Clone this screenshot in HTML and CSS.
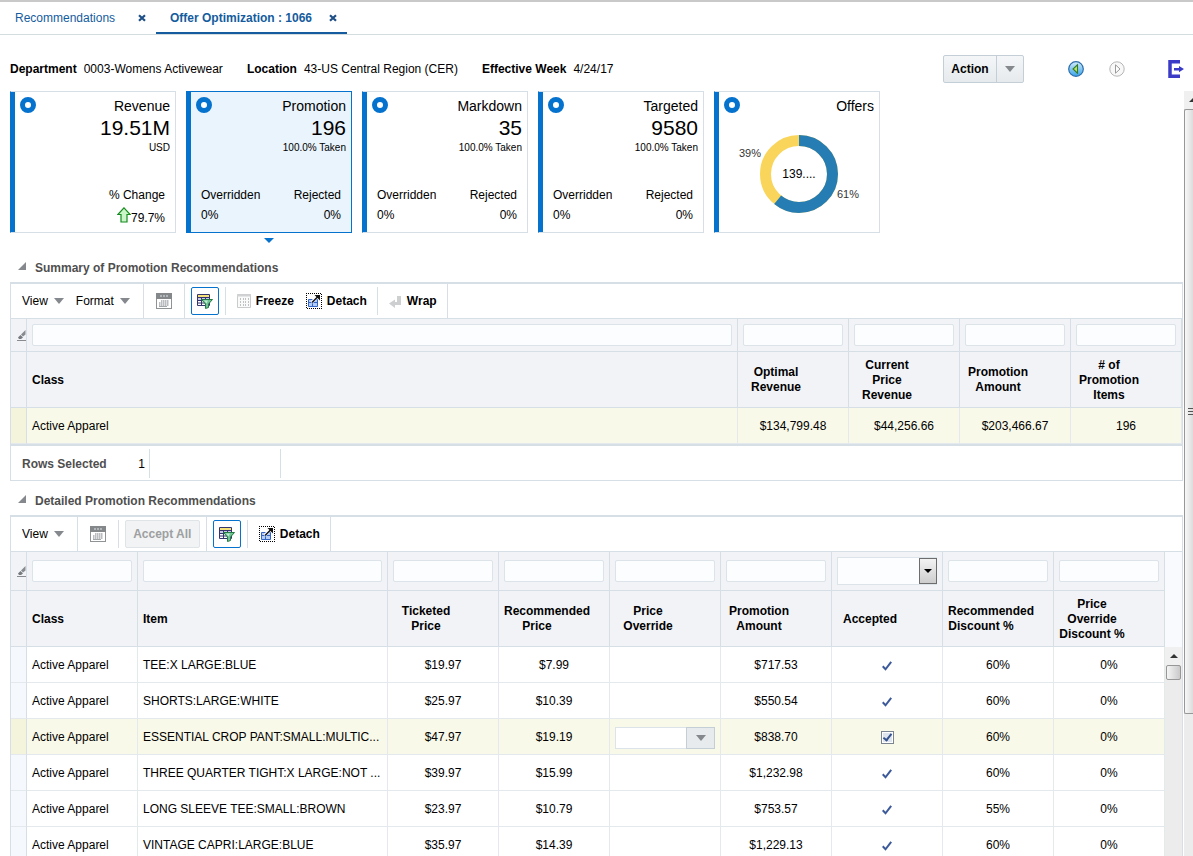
FILE: index.html
```html
<!DOCTYPE html>
<html lang="en">
<head>
  <meta charset="utf-8">
  <title>Offer Optimization : 1066</title>
  <link rel="stylesheet" href="styles.css">
</head>
<body>
  <!-- shared icons -->
  <svg class="icon-defs" aria-hidden="true">
    <symbol id="i-close" viewBox="0 0 8 8">
      <path d="M1 1.2l6 5.6M7 1.2l-6 5.6" stroke="#1d4f86" stroke-width="2.2" fill="none"/>
    </symbol>
    <symbol id="i-down" viewBox="0 0 10 6">
      <path d="M0 0h10L5 6z" fill="#85898d"/>
    </symbol>
    <symbol id="i-ring" viewBox="0 0 16 16">
      <circle cx="8" cy="8" r="5.5" fill="#fff" stroke="#0572ce" stroke-width="5"/>
    </symbol>
    <symbol id="i-disclose" viewBox="0 0 8 8">
      <path d="M8 0v8H0z" fill="#85898d"/>
    </symbol>
    <symbol id="i-calendar" viewBox="0 0 16 16">
      <rect x=".5" y=".5" width="15" height="15" fill="#fff" stroke="#909396"/>
      <path d="M0 0h16v6H0z" fill="#85888b"/>
      <path d="M4 2h2v2H4zM7 2h2v2H7zM10 2h2v2h-2z" fill="#b4b7ba"/>
      <path d="M5 8h8M3 10h10M3 12h10" stroke="#a4a7aa" stroke-width="1.500" stroke-dasharray="1.500 .5"/>
      <path d="M3 13.500h8" stroke="#a4a7aa"/>
    </symbol>
    <symbol id="i-filter" viewBox="0 0 16 16">
      <path d="M.5 1.500h12v11H.5z" fill="#fff" stroke="#35356e"/>
      <path d="M1 2h11v2.500H1z" fill="#f5e27a"/>
      <path d="M1 5h11v2H1z" fill="#c9c9e6"/>
      <path d="M.5 4.500h12M.5 7.500h12M.5 10h12M4.500 4.500v8M8.500 4.500v8" stroke="#35356e"/>
      <path d="M4.500 6.500h11l-4 4.500v3.500l-3 1V11z" fill="#6fc592" stroke="#237a45"/>
      <path d="M7 7.500h4l-1.500 3z" fill="#c3ecd2"/>
    </symbol>
    <symbol id="i-freeze" viewBox="0 0 14 14">
      <path d="M.5.5h13v13H.5z" fill="#fafafa" stroke="#c9cbcd"/>
      <path d="M0 1.500h14" stroke="#d0d2d4" stroke-width="2"/>
      <path d="M3.500 4v8M6.500 4v8M8.500 4v8M11.500 4v8" stroke="#bfc1c3" stroke-dasharray="2 1"/>
    </symbol>
    <symbol id="i-detach" viewBox="0 0 16 16">
      <path d="M0 0h16v16H0z" fill="#fff"/>
      <path d="M0 .5h16M1 15.500h15M.5 0v16M15.500 1v15" stroke="#000" stroke-dasharray="1 1"/>
      <path d="M2.500 6.500h9v7h-9z" fill="#b6cdf5" stroke="#3465c4"/>
      <path d="M2.500 9.500h9M6.500 9.500v4" stroke="#3465c4"/>
      <path d="M5.500 9.500L11 4" stroke="#fff" stroke-width="3"/>
      <path d="M6 9.500L12 3.500" stroke="#111" stroke-width="1.500"/>
      <path d="M8.500 2H14v5.500z" fill="#111"/>
    </symbol>
    <symbol id="i-wrap" viewBox="0 0 13 13">
      <path d="M8 1h4v9H6v3L0 8.500 6 4.500V7h2z" fill="#cdcfd1"/>
    </symbol>
    <symbol id="i-eraser" viewBox="0 0 9 11">
      <path d="M8.500 0v4.500L6 6.500 4 4.500z" fill="#888b8f"/>
      <path d="M3.500 5L6 7.500 4 9H2L1 7.500z" fill="#777a7e"/>
      <path d="M0 10.500h9" stroke="#888b8f"/>
    </symbol>
    <symbol id="i-check" viewBox="0 0 10 10">
      <path d="M.7 5.300L3.500 8.300 9.200.8" fill="none" stroke="#3c5a9a" stroke-width="2"/>
    </symbol>
    <symbol id="i-scroll-up" viewBox="0 0 8 4">
      <path d="M4 0l4 4H0z" fill="#333"/>
    </symbol>
  </svg>

  <div class="app">
    <nav class="tabs">
      <div class="tab">
        <a href="#">Recommendations</a>
        <button class="icon-btn" aria-label="Close"><svg width="8" height="8"><use href="#i-close"/></svg></button>
      </div>
      <div class="tab tab-active">
        <a href="#">Offer Optimization : 1066</a>
        <button class="icon-btn" aria-label="Close"><svg width="8" height="8"><use href="#i-close"/></svg></button>
      </div>
    </nav>

    <header class="context">
      <dl class="context-list">
        <div><dt>Department</dt><dd>0003-Womens Activewear</dd></div>
        <div><dt>Location</dt><dd>43-US Central Region (CER)</dd></div>
        <div><dt>Effective Week</dt><dd>4/24/17</dd></div>
      </dl>
      <div class="actions">
        <button class="split-main">Action</button>
        <button class="split-arrow" aria-label="Action menu"><svg width="10" height="6"><use href="#i-down"/></svg></button>
      </div>
      <div class="pager">
        <button class="icon-btn" aria-label="Previous">
          <svg width="16" height="16" viewBox="0 0 16 16">
            <defs><linearGradient id="blueball" x1="0" y1="0" x2="0" y2="1"><stop offset="0" stop-color="#d3ecfb"/><stop offset="1" stop-color="#38a3ea"/></linearGradient></defs>
            <circle cx="8" cy="8" r="7.300" fill="url(#blueball)" stroke="#2d6cab" stroke-width="1.200"/>
            <path d="M9.500 3.800v8.400L5 8z" fill="#b4e66c" stroke="#35792a" stroke-width="1.100"/>
          </svg>
        </button>
        <button class="icon-btn" aria-label="Next" disabled>
          <svg width="16" height="16" viewBox="0 0 16 16">
            <circle cx="8" cy="8" r="7.200" fill="#f8f8f8" stroke="#b5b5b5"/>
            <path d="M6.500 3.800v8.400L11 8z" fill="#fff" stroke="#9a9a9a"/>
          </svg>
        </button>
      </div>
      <button class="icon-btn" aria-label="Exit">
        <svg width="16" height="18" viewBox="0 0 16 18">
          <path d="M12 1.800H2v14.400h10" fill="none" stroke="#3b3bc8" stroke-width="3.500"/>
          <path d="M6 8h5V6l5 3-5 3.200V10.500H6z" fill="#3b3bc8"/>
        </svg>
      </button>
    </header>

    <div class="workspace">
      <main class="content">
        <div class="tiles">
          <section class="tile">
            <div class="tile-head">
              <svg width="16" height="16"><use href="#i-ring"/></svg>
              <div class="tile-figures"><h2>Revenue</h2><strong>19.51M</strong><small>USD</small></div>
            </div>
            <div class="tile-metrics">
              <div class="metric metric-end">
                <span>% Change</span>
                <span class="trend">
                  <svg width="14" height="16" viewBox="0 0 14 16"><path d="M7 .8L13.200 7.500H10v7.500H4V7.500H.8z" fill="#c9f5c9" stroke="#178a1e" stroke-width="1.200"/></svg>79.7%
                </span>
              </div>
            </div>
          </section>
          <section class="tile tile-selected">
            <div class="tile-head">
              <svg width="16" height="16"><use href="#i-ring"/></svg>
              <div class="tile-figures"><h2>Promotion</h2><strong>196</strong><small>100.0% Taken</small></div>
            </div>
            <div class="tile-metrics">
              <div class="metric"><span>Overridden</span><span>0%</span></div>
              <div class="metric metric-end"><span>Rejected</span><span>0%</span></div>
            </div>
          </section>
          <section class="tile">
            <div class="tile-head">
              <svg width="16" height="16"><use href="#i-ring"/></svg>
              <div class="tile-figures"><h2>Markdown</h2><strong>35</strong><small>100.0% Taken</small></div>
            </div>
            <div class="tile-metrics">
              <div class="metric"><span>Overridden</span><span>0%</span></div>
              <div class="metric metric-end"><span>Rejected</span><span>0%</span></div>
            </div>
          </section>
          <section class="tile">
            <div class="tile-head">
              <svg width="16" height="16"><use href="#i-ring"/></svg>
              <div class="tile-figures"><h2>Targeted</h2><strong>9580</strong><small>100.0% Taken</small></div>
            </div>
            <div class="tile-metrics">
              <div class="metric"><span>Overridden</span><span>0%</span></div>
              <div class="metric metric-end"><span>Rejected</span><span>0%</span></div>
            </div>
          </section>
          <section class="tile">
            <div class="tile-head">
              <svg width="16" height="16"><use href="#i-ring"/></svg>
              <div class="tile-figures"><h2>Offers</h2></div>
            </div>
            <svg class="donut" width="160" height="110" viewBox="0 0 160 110">
              <circle cx="80" cy="58" r="33.500" fill="none" stroke="#fad55c" stroke-width="11"/>
              <circle cx="80" cy="58" r="33.500" fill="none" stroke="#267db3" stroke-width="11" pathLength="100" stroke-dasharray="61 39" transform="rotate(-90 80 58)"/>
              <text class="donut-total" x="80" y="62" text-anchor="middle">139....</text>
              <text x="20" y="41">39%</text>
              <text x="118" y="82">61%</text>
            </svg>
          </section>
        </div>

        <section class="panel">
          <h3><svg width="8" height="8"><use href="#i-disclose"/></svg>Summary of Promotion Recommendations</h3>
          <div class="grid-box">
            <div class="toolbar">
              <div class="tool-group menus">
                <button class="menu">View<svg width="10" height="6"><use href="#i-down"/></svg></button>
                <button class="menu">Format<svg width="10" height="6"><use href="#i-down"/></svg></button>
              </div>
              <div class="tool-group">
                <button class="icon-btn" aria-label="Export"><svg width="16" height="16"><use href="#i-calendar"/></svg></button>
              </div>
              <div class="tool-group tight short">
                <button class="filter-btn" aria-label="Query by example" aria-pressed="true"><svg width="16" height="16"><use href="#i-filter"/></svg></button>
              </div>
              <div class="tool-group tools short">
                <button class="tool"><svg width="14" height="14"><use href="#i-freeze"/></svg>Freeze</button>
                <button class="tool"><svg width="16" height="16"><use href="#i-detach"/></svg>Detach</button>
              </div>
              <div class="tool-group tools">
                <button class="tool"><svg width="13" height="13"><use href="#i-wrap"/></svg>Wrap</button>
              </div>
            </div>
            <table class="grid">
              <colgroup><col class="col-mark"><col><col class="col-num"><col class="col-num"><col class="col-num"><col class="col-num"></colgroup>
              <thead>
                <tr class="filters">
                  <td class="mark"><svg width="9" height="11"><use href="#i-eraser"/></svg></td>
                  <td><input type="text" aria-label="Class"></td>
                  <td><input type="text" aria-label="Optimal Revenue"></td>
                  <td><input type="text" aria-label="Current Price Revenue"></td>
                  <td><input type="text" aria-label="Promotion Amount"></td>
                  <td><input type="text" aria-label="# of Promotion Items"></td>
                </tr>
                <tr class="heads">
                  <td class="mark"></td>
                  <th class="text">Class</th>
                  <th>Optimal Revenue</th>
                  <th>Current Price Revenue</th>
                  <th>Promotion Amount</th>
                  <th># of Promotion Items</th>
                </tr>
              </thead>
              <tbody>
                <tr class="selected">
                  <td class="mark"></td>
                  <td class="text">Active Apparel</td>
                  <td>$134,799.48</td>
                  <td>$44,256.66</td>
                  <td>$203,466.67</td>
                  <td>196</td>
                </tr>
              </tbody>
            </table>
            <div class="status">
              <div class="status-cell"><b>Rows Selected</b><span>1</span></div>
              <div class="status-cell"></div>
            </div>
          </div>
        </section>

        <section class="panel">
          <h3><svg width="8" height="8"><use href="#i-disclose"/></svg>Detailed Promotion Recommendations</h3>
          <div class="grid-box">
            <div class="toolbar">
              <div class="tool-group menus">
                <button class="menu">View<svg width="10" height="6"><use href="#i-down"/></svg></button>
              </div>
              <div class="tool-group short">
                <button class="icon-btn" aria-label="Export"><svg width="16" height="16"><use href="#i-calendar"/></svg></button>
              </div>
              <div class="tool-group tight">
                <button class="accept" disabled>Accept All</button>
              </div>
              <div class="tool-group tight short">
                <button class="filter-btn" aria-label="Query by example" aria-pressed="true"><svg width="16" height="16"><use href="#i-filter"/></svg></button>
              </div>
              <div class="tool-group tools">
                <button class="tool"><svg width="16" height="16"><use href="#i-detach"/></svg>Detach</button>
              </div>
            </div>
            <div class="scroll-grid">
              <table class="grid detail">
                <colgroup>
                  <col class="col-mark"><col class="col-num"><col><col class="col-num"><col class="col-num"><col class="col-num"><col class="col-num"><col class="col-num"><col class="col-num"><col class="col-num">
                </colgroup>
                <thead>
                  <tr class="filters">
                    <td class="mark"><svg width="9" height="11"><use href="#i-eraser"/></svg></td>
                    <td><input type="text" aria-label="Class"></td>
                    <td><input type="text" aria-label="Item"></td>
                    <td><input type="text" aria-label="Ticketed Price"></td>
                    <td><input type="text" aria-label="Recommended Price"></td>
                    <td><input type="text" aria-label="Price Override"></td>
                    <td><input type="text" aria-label="Promotion Amount"></td>
                    <td>
                      <div class="select-wrap">
                        <select aria-label="Accepted"><option></option></select>
                        <span class="select-arrow"><svg width="8" height="4" viewBox="0 0 8 4"><path d="M0 0h8L4 4z"/></svg></span>
                      </div>
                    </td>
                    <td><input type="text" aria-label="Recommended Discount %"></td>
                    <td><input type="text" aria-label="Price Override Discount %"></td>
                  </tr>
                  <tr class="heads">
                    <td class="mark"></td>
                    <th class="text">Class</th>
                    <th class="text">Item</th>
                    <th>Ticketed Price</th>
                    <th>Recommended Price</th>
                    <th>Price Override</th>
                    <th>Promotion Amount</th>
                    <th>Accepted</th>
                    <th>Recommended Discount&nbsp;%</th>
                    <th>Price Override Discount&nbsp;%</th>
                  </tr>
                </thead>
                <tbody>
                  <tr>
                    <td class="mark"></td>
                    <td class="text">Active Apparel</td>
                    <td class="text">TEE:X LARGE:BLUE</td>
                    <td>$19.97</td>
                    <td>$7.99</td>
                    <td></td>
                    <td>$717.53</td>
                    <td><svg class="tick" width="10" height="10"><use href="#i-check"/></svg></td>
                    <td>60%</td>
                    <td>0%</td>
                  </tr>
                  <tr>
                    <td class="mark"></td>
                    <td class="text">Active Apparel</td>
                    <td class="text">SHORTS:LARGE:WHITE</td>
                    <td>$25.97</td>
                    <td>$10.39</td>
                    <td></td>
                    <td>$550.54</td>
                    <td><svg class="tick" width="10" height="10"><use href="#i-check"/></svg></td>
                    <td>60%</td>
                    <td>0%</td>
                  </tr>
                  <tr class="selected">
                    <td class="mark"></td>
                    <td class="text">Active Apparel</td>
                    <td class="text">ESSENTIAL CROP PANT:SMALL:MULTIC...</td>
                    <td>$47.97</td>
                    <td>$19.19</td>
                    <td>
                      <div class="combo">
                        <input type="text" aria-label="Price Override">
                        <button aria-label="Choose price"><svg width="10" height="6"><use href="#i-down"/></svg></button>
                      </div>
                    </td>
                    <td>$838.70</td>
                    <td><input type="checkbox" aria-label="Accepted" checked></td>
                    <td>60%</td>
                    <td>0%</td>
                  </tr>
                  <tr>
                    <td class="mark"></td>
                    <td class="text">Active Apparel</td>
                    <td class="text">THREE QUARTER TIGHT:X LARGE:NOT ...</td>
                    <td>$39.97</td>
                    <td>$15.99</td>
                    <td></td>
                    <td>$1,232.98</td>
                    <td><svg class="tick" width="10" height="10"><use href="#i-check"/></svg></td>
                    <td>60%</td>
                    <td>0%</td>
                  </tr>
                  <tr>
                    <td class="mark"></td>
                    <td class="text">Active Apparel</td>
                    <td class="text">LONG SLEEVE TEE:SMALL:BROWN</td>
                    <td>$23.97</td>
                    <td>$10.79</td>
                    <td></td>
                    <td>$753.57</td>
                    <td><svg class="tick" width="10" height="10"><use href="#i-check"/></svg></td>
                    <td>55%</td>
                    <td>0%</td>
                  </tr>
                  <tr>
                    <td class="mark"></td>
                    <td class="text">Active Apparel</td>
                    <td class="text">VINTAGE CAPRI:LARGE:BLUE</td>
                    <td>$35.97</td>
                    <td>$14.39</td>
                    <td></td>
                    <td>$1,229.13</td>
                    <td><svg class="tick" width="10" height="10"><use href="#i-check"/></svg></td>
                    <td>60%</td>
                    <td>0%</td>
                  </tr>
                </tbody>
              </table>
              <div class="grid-scroll" aria-hidden="true">
                <div class="grid-scroll-head"></div>
                <div class="scroll-up"><svg width="8" height="4"><use href="#i-scroll-up"/></svg></div>
                <div class="grid-thumb"></div>
              </div>
            </div>
          </div>
        </section>
      </main>

      <!-- page scrollbar -->
      <div class="page-scroll" aria-hidden="true">
        <div class="scroll-up"><svg width="8" height="4"><use href="#i-scroll-up"/></svg></div>
        <div class="page-track">
          <div class="page-thumb"><i></i><i></i><i></i></div>
        </div>
      </div>
    </div>
  </div>
</body>
</html>
```

FILE: styles.css
```css
* {
  box-sizing: border-box;
}

body {
  margin: 0;
  background: #fff;
  color: #000;
  font: 12px/15px "Liberation Sans", Arial, sans-serif;
}

button,
input,
select {
  font: inherit;
  color: inherit;
}

button {
  padding: 0;
  border: 0;
  background: none;
}

svg {
  display: block;
  flex: none;
}

.icon-defs {
  position: absolute;
  width: 0;
  height: 0;
}

.icon-btn {
  display: flex;
}

.app {
  display: flex;
  flex-direction: column;
  height: 100vh;
  overflow: hidden;
  border-top: 2px solid #c9c9c9;
}

/* tabs */
.tabs {
  display: flex;
  flex: none;
  height: 33px;
  padding-left: 1px;
  border-bottom: 1px solid #d3dcdf;
}

.tab {
  display: flex;
  align-items: center;
  gap: 17px;
  padding: 2px 10px 0 14px;
  border-bottom: 2px solid transparent;
}

.tab a {
  min-width: 106px;
  color: #145c9e;
  text-decoration: none;
}

.tab-active {
  border-bottom-color: #145c9e;
  font-weight: bold;
}

/* context bar */
.context {
  display: flex;
  flex: none;
  align-items: center;
  height: 56px;
  padding: 12px 9px 0 10px;
}

.context-list {
  display: flex;
  gap: 24px;
  margin: 0;
}

.context-list div {
  display: flex;
  gap: 7px;
}

.context-list dt {
  font-weight: bold;
}

.context-list dd {
  margin: 0;
}

.actions {
  display: flex;
  height: 28px;
  margin-left: auto;
  border: 1px solid #c4ced7;
  border-radius: 2px;
  background: linear-gradient(#f4f6f8, #e6eaed);
}

.split-main {
  width: 52px;
  font-weight: bold;
}

.split-arrow {
  display: flex;
  align-items: center;
  justify-content: center;
  width: 27px;
  border-left: 1px solid #c4ced7;
}

.pager {
  display: flex;
  gap: 25px;
  margin: 0 43px 0 44px;
}

/* workspace */
.workspace {
  display: flex;
  flex: 1;
  min-height: 0;
}

.content {
  flex: 1;
  min-width: 0;
  padding: 0 1px 0 10px;
}

/* tiles */
.tiles {
  display: flex;
  gap: 10px;
  margin-bottom: 20px;
}

.tile {
  position: relative;
  width: 166px;
  padding-left: 4px;
  border: 1px solid #d6dfe6;
  border-left-color: #0572ce;
  box-shadow: inset 4px 0 #0572ce;
}

.tile-selected {
  border-color: #0572ce;
  background: #e9f4fc;
}

/* pointer under the selected tile */
.tile-selected::after {
  content: "";
  position: absolute;
  left: 77px;
  bottom: -11px;
  border: 5px solid transparent;
  border-top: 5px solid #0572ce;
  border-bottom: 0;
}

.tile-head {
  display: flex;
  justify-content: space-between;
  padding: 4px 5px 0 5px;
}

.tile-head svg {
  margin-top: 1px;
}

.tile-figures {
  display: flex;
  flex-direction: column;
  text-align: right;
}

.tile h2 {
  margin: 0;
  font-size: 14px;
  font-weight: normal;
  line-height: 20px;
}

.tile strong {
  font-size: 21px;
  font-weight: normal;
  line-height: 24px;
}

.tile small {
  font-size: 10px;
  line-height: 16px;
}

.tile-metrics {
  display: flex;
  justify-content: space-between;
  padding: 29px 10px 1px;
  line-height: 20px;
}

.metric {
  display: flex;
  flex-direction: column;
}

.metric-end {
  margin-left: auto;
  text-align: right;
}

.trend {
  display: flex;
  align-items: flex-end;
  justify-content: flex-end;
  line-height: 26px;
}

.trend svg {
  margin-bottom: 8px;
}

.donut {
  fill: #333;
  font-size: 11px;
}

.donut-total {
  fill: #000;
  font-size: 12px;
}

/* panels */
.panel {
  margin-bottom: 5px;
}

.panel h3 {
  display: flex;
  align-items: center;
  gap: 9px;
  margin: 0;
  padding: 2px 0 0 8px;
  color: #4f4f4f;
  font-size: 12px;
  line-height: 27px;
}

.panel h3 svg {
  margin-bottom: 5px;
}

.grid-box {
  border: 1px solid #d6dfe6;
  border-top-width: 2px;
}

/* toolbar */
.toolbar {
  display: flex;
  height: 35px;
  border-bottom: 1px solid #d6dfe6;
}

.tool-group {
  display: flex;
  align-items: center;
  gap: 12px;
  padding: 0 12px;
  border-right: 1px solid #d6dfe6;
}

.tool-group.short {
  margin: 3px 0;
}

.menus {
  padding: 0 13px 0 11px;
}

.tight {
  padding: 0 6px;
}

.tools {
  padding: 0 10px 0 11px;
}

.menu,
.tool {
  display: flex;
  align-items: center;
  gap: 6px;
}

.tool {
  gap: 5px;
  font-weight: bold;
}

.filter-btn {
  display: flex;
  align-items: center;
  justify-content: center;
  width: 28px;
  height: 28px;
  border: 1px solid #0572ce;
  border-radius: 2px;
}

.accept {
  width: 75px;
  height: 28px;
  border: 1px solid #dfe4e7;
  border-radius: 2px;
  background: #f1f3f5;
  color: #9d9fa1;
  font-weight: bold;
}

/* grids */
.grid {
  width: 100%;
  border-spacing: 0;
  table-layout: fixed;
}

.grid td,
.grid th {
  padding: 0 5px;
  border: 0 solid #d6dfe6;
  border-width: 0 1px 1px 0;
  text-align: center;
}

.col-mark {
  width: 16px;
}

.col-num {
  width: 111px;
}

.grid thead td,
.grid thead th {
  background: #f1f3f7;
}

.grid .filters td {
  height: 33px;
}

.detail .filters td {
  height: 39px;
}

.grid .heads th {
  height: 56px;
  padding: 1px 39px 0 5px;
}

.grid tbody td {
  height: 36px;
  padding-top: 2px;
  border-color: #e4e9ed;
}

.grid .mark {
  padding: 0;
  border-right-color: #d6dfe6;
}

.grid .text {
  text-align: left;
  white-space: nowrap;
}

.grid .mark svg {
  margin-left: auto;
}

.grid tbody .mark {
  background: #f5f8fc;
}

.grid .selected td {
  background: #f9f9e9;
}

.grid .selected .mark {
  background: #f4f3dc;
}

.grid input[type="text"] {
  display: block;
  width: 100%;
  height: 22px;
  border: 1px solid #dce3e9;
  border-radius: 2px;
  background: #fcfdfe;
}

.select-wrap {
  position: relative;
}

.select-wrap select {
  display: block;
  width: 100%;
  height: 28px;
  border: 1px solid #dce3e9;
  background: #fcfdfe;
  appearance: none;
}

.select-arrow {
  position: absolute;
  top: 1px;
  right: 0;
  display: flex;
  align-items: center;
  justify-content: center;
  width: 18px;
  height: 26px;
  border: 1px solid #6d6d6d;
  background: linear-gradient(#f3f3f3, #cdcdcd);
  pointer-events: none;
}

.combo {
  display: flex;
}

.grid .combo input {
  flex: 1;
  min-width: 0;
  border-right: 0;
  border-radius: 0;
  background: #fff;
}

.combo button {
  display: flex;
  align-items: center;
  justify-content: center;
  width: 29px;
  height: 22px;
  border: 1px solid #c4ced7;
  background: #e7ebee;
}

.tick {
  margin: 0 auto;
}

.grid input[type="checkbox"] {
  display: block;
  width: 13px;
  height: 13px;
  margin: 0 auto;
  border: 1px solid #7b8592;
  background: #dfe5ef;
  box-shadow: inset 0 0 0 1px #fff;
  appearance: none;
}

.grid input[type="checkbox"]:checked::after {
  content: "";
  display: block;
  width: 3px;
  height: 7px;
  margin: 0 auto;
  border: solid #35538f;
  border-width: 0 2px 2px 0;
  transform: rotate(38deg);
}

/* footer of the summary grid */
.status {
  display: flex;
  height: 36px;
  padding: 3px 0 2px;
  border-top: 2px solid #d6dfe6;
}

.status-cell {
  display: flex;
  align-items: center;
  justify-content: space-between;
  width: 131px;
  padding-top: 1px;
  border-right: 1px solid #d6dfe6;
}

.status-cell:first-child {
  width: 139px;
  padding: 1px 4px 0 11px;
}

.status b {
  color: #4f4f4f;
}

/* scrollbars */
.scroll-grid {
  display: flex;
}

.grid-scroll {
  display: flex;
  flex-direction: column;
  width: 17px;
  flex: none;
  background: #ececec;
}

.grid-scroll-head {
  height: 95px;
  background: #f8fafd;
}

.scroll-up {
  display: flex;
  align-items: center;
  justify-content: center;
  height: 18px;
  flex: none;
  background: #f0f0f0;
}

.grid-thumb {
  height: 15px;
  margin: 0 1px;
  border: 1px solid #979797;
  border-radius: 2px;
  background: linear-gradient(90deg, #f5f5f5, #c9c9c9);
}

.page-scroll {
  display: flex;
  flex-direction: column;
  width: 9px;
  overflow: hidden;
  background: #ececec;
}

.page-scroll .scroll-up {
  justify-content: flex-start;
  padding-left: 5px;
}

.page-track {
  flex: 1;
}

.page-thumb {
  display: flex;
  flex-direction: column;
  align-items: flex-end;
  justify-content: center;
  gap: 2px;
  height: 81%;
  border: 1px solid #979797;
  border-right: 0;
  border-radius: 2px 0 0 2px;
  background: linear-gradient(90deg, #f8f8f8, #dcdcdc);
}

.page-thumb i {
  width: 5px;
  height: 1px;
  background: #555;
}
```
